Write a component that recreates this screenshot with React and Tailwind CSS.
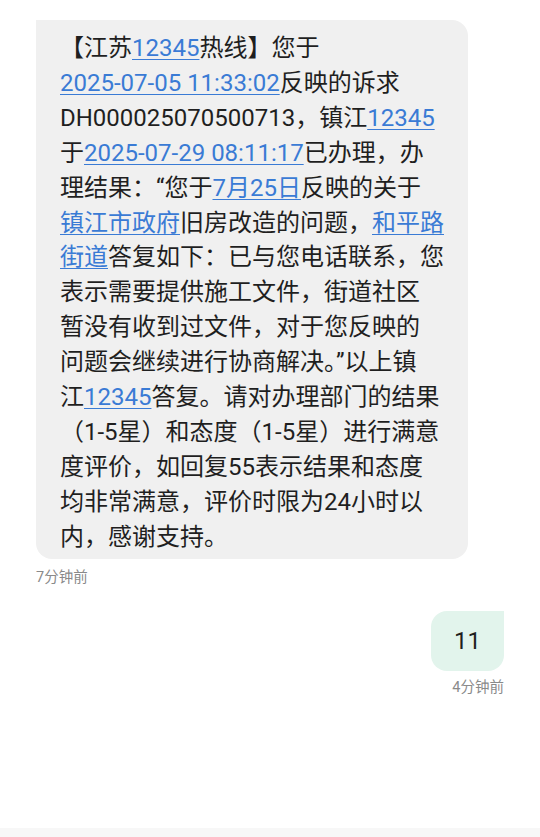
const L = ({ children }) => (
  <span className="text-[#3a7bd5] underline decoration-1 underline-offset-[3px]">{children}</span>
);

const lines = [
  <>【江苏<L>12345</L>热线】您于</>,
  <><L>2025-07-05 11:33:02</L>反映的诉求</>,
  <>DH000025070500713，镇江<L>12345</L></>,
  <>于<L>2025-07-29 08:11:17</L>已办理，办</>,
  <>理结果：“您于<L>7月25日</L>反映的关于</>,
  <><L>镇江市政府</L>旧房改造的问题，<L>和平路</L></>,
  <><L>街道</L>答复如下：已与您电话联系，您</>,
  <>表示需要提供施工文件，街道社区</>,
  <>暂没有收到过文件，对于您反映的</>,
  <>问题会继续进行协商解决。”以上镇</>,
  <>江<L>12345</L>答复。请对办理部门的结果</>,
  <>（1-5星）和态度（1-5星）进行满意</>,
  <>度评价，如回复55表示结果和态度</>,
  <>均非常满意，评价时限为24小时以</>,
  <>内，感谢支持。</>,
];

export default function App() {
  return (
    <div className="w-[540px] h-[837px] bg-white flex flex-col font-['Roboto','Noto_Sans_CJK_SC',sans-serif] text-[#1f1f1f] overflow-hidden">
      <div className="flex-1 flex flex-col px-[36px] pt-[20px]">
        {/* received */}
        <div className="w-[432px] bg-[#f0f0f0] rounded-2xl rounded-tl-none pl-[24px] pr-[16px] pt-[11px] pb-[4px]">
          {lines.map((ln, i) => (
            <div key={i} className="text-[24px] leading-[34.9px] whitespace-nowrap">
              {ln}
            </div>
          ))}
        </div>
        <div className="mt-[9px] text-[14.5px] text-[#8a8a8a] leading-[20px]">7分钟前</div>

        {/* sent */}
        <div className="mt-[23px] flex flex-col items-end">
          <div className="w-[73px] h-[60px] bg-[#e2f4ec] rounded-2xl rounded-tr-none flex items-center justify-center text-[24px] text-[#1f1f1f]">
            11
          </div>
          <div className="mt-[7px] text-[14.5px] text-[#8a8a8a] leading-[20px]">4分钟前</div>
        </div>
      </div>
      <div className="h-[9px] bg-[#f7f7f7]" />
    </div>
  );
}
